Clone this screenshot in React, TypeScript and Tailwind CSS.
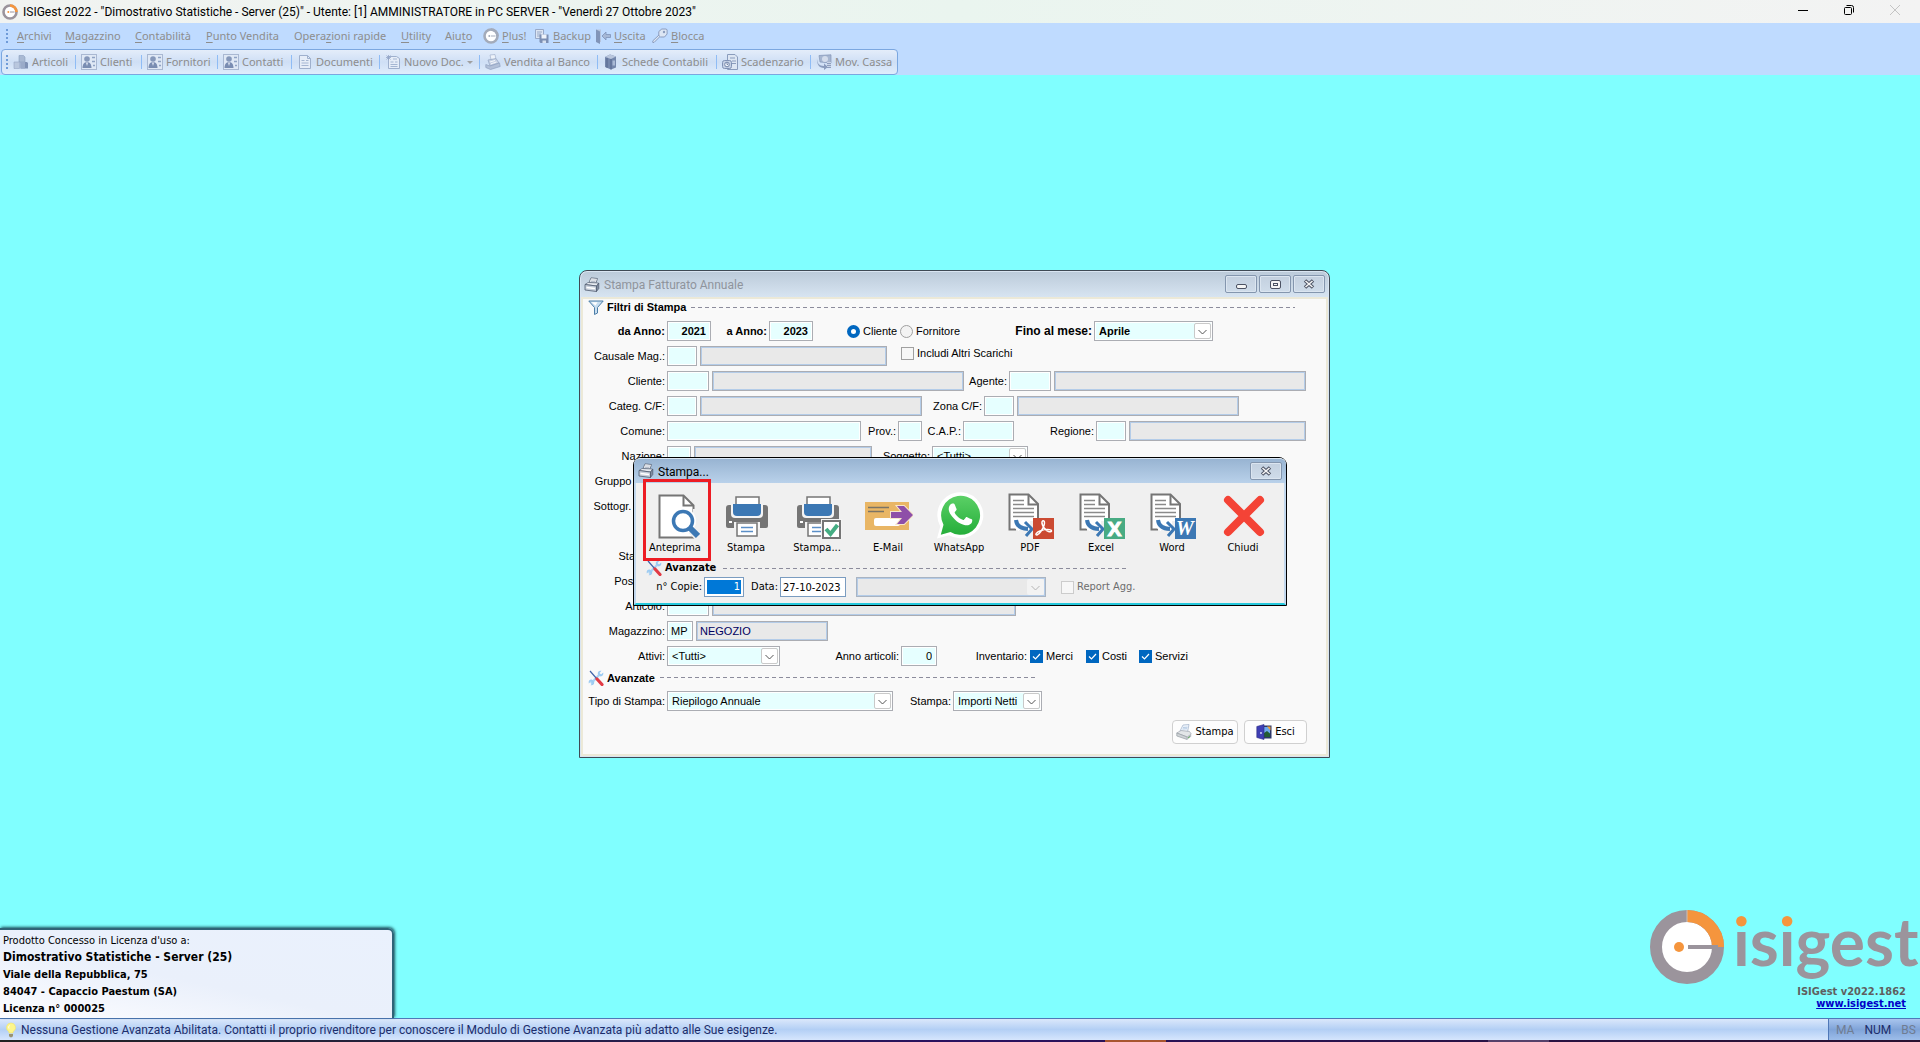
import { ReactNode } from "react";
import clsx from "clsx";

const ui = "font-['Noto_Sans','Open_Sans',sans-serif]";
const caption = "font-['Roboto','Noto_Sans',sans-serif]";
const tahoma = "font-['DejaVu_Sans_Condensed','DejaVu_Sans',sans-serif]";

/* ---------- small icons ---------- */

const Svg = ({ size = 16, children }: { size?: number; children: ReactNode }) => (
    <svg width={size} height={size} viewBox="0 0 16 16" fill="none" className="shrink-0" aria-hidden="true">
        {children}
    </svg>
);

const BrandDisc = ({ ring = "#9b949c", accent = "#f5953d" }: { ring?: string; accent?: string }) => (
    <Svg>
        <circle cx="8" cy="8" r="6.5" fill="#fff" stroke={ring} strokeWidth="2.6" />
        <path d="M8 1.5A6.5 6.5 0 0 1 14.500 8" stroke={accent} strokeWidth="2.600" />
        <path d="M8 8h4.500" stroke={ring} />
        <circle cx="6.300" cy="8" r="1" fill={accent} />
    </Svg>
);

const BoxesIcon = () => (
    <Svg>
        <path d="M6 1.500h4.500L12 3v5H6z" fill="#a9b9d3" stroke="#8b9dbd" strokeWidth=".6" />
        <path d="M1 8h5.500v6.500H1z" fill="#b9c7de" stroke="#93a5c4" strokeWidth=".6" />
        <path d="M7.500 8H14l1 1v5.500H7.500z" fill="#7f92b5" />
        <path d="M7.500 8H12v6.500H7.500z" fill="#9aabc9" />
    </Svg>
);

const ContactIcon = () => (
    <Svg>
        <rect x=".5" y=".5" width="15" height="15" fill="#dfe8f5" stroke="#a9b8d2" />
        <circle cx="6" cy="5" r="2.800" fill="#8698ba" />
        <path d="M1.500 14c0-4 2-6 4.500-6s4.500 2 4.500 6z" fill="#7a8db2" />
        <path d="M5 8.500h2L6 12z" fill="#e8eef8" />
        <path d="M11 3.500h3M11 7.500h3M12 11.500h2" stroke="#8fa2c4" strokeWidth="1.500" />
    </Svg>
);

const DocIcon = () => (
    <Svg>
        <path d="M2.500 1.500h8l3 3v10h-11z" fill="#e6edf8" stroke="#9fb0cd" />
        <path d="M10.500 1.500v3h3" stroke="#9fb0cd" />
        <path d="M4.500 6.500h3M9 6.500h2.500M4.500 9h7M4.500 11.500h7" stroke="#a5b6d2" />
    </Svg>
);

const NewDocIcon = () => (
    <Svg>
        <path d="M3.500 2.500h8l3 2v10h-11z" fill="#e6edf8" stroke="#9fb0cd" />
        <path d="M1 3.500h5M3.500 1v5M1.500 1.500l4 4M5.500 1.500l-4 4" stroke="#93a5c6" strokeWidth=".8" />
        <path d="M8 5h4M5.500 8h3M10 8h2.500M5.500 10.500h7M5.500 12.500h7" stroke="#a5b6d2" />
    </Svg>
);

const RegisterIcon = () => (
    <Svg>
        <path d="M5 1l5-.5 1 5H6z" fill="#eef3fa" stroke="#a3b2cd" strokeWidth=".7" />
        <path d="M3 6l8-1.500 3 4.500-9 3z" fill="#c5d0e3" stroke="#94a5c3" strokeWidth=".7" />
        <path d="M.8 10.500L5 12l9.500-3 .7 3.500-9.700 3-4.700-2z" fill="#b2c0d8" stroke="#8fa0c0" strokeWidth=".7" />
        <path d="M5 8l5-1.500M6 9.800l5.500-1.800" stroke="#f4f7fc" />
    </Svg>
);

const BooksIcon = () => (
    <Svg>
        <path d="M2 3l5-2.500 6 2v11L8 15.500 2 13z" fill="#7487ac" />
        <path d="M2 3l5-2.500 6 2-5 2.500z" fill="#b9c6dd" />
        <path d="M8 5v10.500M4 3.800v10" stroke="#56698f" />
        <path d="M9.500 6.500h2.500v5H9.500z" fill="#a9b9d5" />
    </Svg>
);

const ScheduleIcon = () => (
    <Svg>
        <path d="M5.500.5H13l2.500 2.500v12.500h-10z" fill="#dde6f3" stroke="#8a9cbd" />
        <path d="M8 4h5M10 7h4M10 9.500h4" stroke="#8a9cbd" />
        <rect x=".5" y="6.500" width="9" height="8" rx="2" fill="#c4d0e4" stroke="#8092b5" />
        <circle cx="5" cy="10.500" r="2.300" fill="#f2f6fb" stroke="#7386ab" />
        <path d="M5 9v1.500h1.200" stroke="#5f7299" strokeWidth=".8" />
    </Svg>
);

const CashIcon = () => (
    <Svg>
        <path d="M3 1.500L15 .8V9L4 8z" fill="#a6b6d1" stroke="#8496b8" strokeWidth=".7" />
        <path d="M1 4c0 5 2 8 7 8V9.500l4 3.500-4 3v-2C3 14 .5 10 1 4z" fill="#8a9cbe" />
        <circle cx="9" cy="5" r="3" fill="#d3dcec" />
        <path d="M11 8h4v6h-4z" fill="#c9d4e6" />
        <path d="M11 9.500h4M11 11.500h4M11 13.500h4" stroke="#7d90b4" strokeWidth=".8" />
    </Svg>
);

const BackupIcon = () => (
    <Svg>
        <path d="M1.500 1.500h8v9h-8z" fill="#dce5f3" stroke="#98a9c8" />
        <path d="M3 4h5M3 6h4M3 8h3" stroke="#98a9c8" />
        <path d="M5.500 6.500h9v8.500h-8l-1-1z" fill="#7c8fb4" />
        <path d="M7.500 6.500h5v4h-5z" fill="#eef3fb" />
        <path d="M8.500 12.500h3.500V15H8.500z" fill="#d6e0ef" />
    </Svg>
);

const DoorIcon = () => (
    <Svg>
        <path d="M1 1.500h5V14H1z" fill="#b6c5de" />
        <path d="M1 1.500l4 2V16l-4-2z" fill="#8194b8" />
        <path d="M7 8l4-4v2.500h4.500v3H11V12z" fill="#a6b8d6" stroke="#7f93b9" strokeWidth=".8" />
    </Svg>
);

const KeyIcon = () => (
    <Svg>
        <path d="M8 8.500L2 14.500H.8v-1.700L7 7" fill="#dce6f4" stroke="#8a9cbe" />
        <path d="M6.800 3.500l3-2.500h4.500l.8 1v4l-2.600 3H8.500L6.800 7.500z" fill="#dce6f4" stroke="#8a9cbe" />
        <circle cx="12" cy="4" r="1.200" fill="#8a9cbe" />
    </Svg>
);

const PrinterIcon = () => (
    <Svg>
        <path d="M5 5.500L7 .8l6.500.7L12 6z" fill="#fff" stroke="#596579" strokeWidth=".8" />
        <path d="M7 3h5M6.500 4.500h5" stroke="#9aa5b8" strokeWidth=".7" />
        <path d="M1 7.500L4 5.500l10.500.5L13 9z" fill="#e8ecf2" stroke="#5d687c" strokeWidth=".7" />
        <path d="M1 7.500L12.500 9v5.500L1 13z" fill="#c7cfdb" stroke="#4f5a6e" strokeWidth=".8" />
        <path d="M12.500 9L14.800 6v5.500l-2.300 3z" fill="#7f8ba0" stroke="#4f5a6e" strokeWidth=".7" />
        <path d="M2.500 10.500l8.500 1" stroke="#fff" strokeWidth="1.400" />
    </Svg>
);

const SoftPrinterIcon = () => (
    <Svg>
        <path d="M4 7L7 1l6-.5L11.500 8z" fill="#eef4fb" stroke="#9db0c9" strokeWidth=".7" />
        <path d="M7 3.500l4.500-.3M6.500 5l4.500-.3" stroke="#a9c3e0" strokeWidth=".8" />
        <path d="M.8 9L5 6.500l8.500 1 1.700 2.500-4 3z" fill="#e3e6e8" stroke="#a0a6ad" strokeWidth=".7" />
        <path d="M.8 9l10.400 4v2.500L.8 12z" fill="#cfd3d6" stroke="#979da5" strokeWidth=".7" />
        <path d="M11.200 13l4-3v2.500l-4 3z" fill="#b4bac0" />
        <path d="M12 14l2-1.500" stroke="#67b35d" />
    </Svg>
);

const ExitIcon = () => (
    <Svg>
        <path d="M6 1.500h9.500v13H6z" fill="#2d3768" />
        <path d="M8 3h6v10H8z" fill="#6da8ee" />
        <path d="M8 9l3-2 3 2.500V13H8z" fill="#235c33" />
        <path d="M11 2.500h3.500v4z" fill="#f5a32f" />
        <path d="M.8 2.500L8 .5v15l-7.200-2z" fill="#3f3fb4" stroke="#2c2c83" strokeWidth=".6" />
        <circle cx="5" cy="9" r=".9" fill="#e9e9ff" />
    </Svg>
);

const FunnelIcon = () => (
    <Svg>
        <path d="M.8 2h14.400L9.500 8.500V14l-3 1.500v-7z" fill="#c8def0" stroke="#4d7ea8" />
        <path d="M3.500 3.200h6L7.500 6.500z" fill="#fff" />
    </Svg>
);

const ToolsIcon = () => (
    <Svg>
        <path d="M3 13.500L12 4" stroke="#a9d3f5" strokeWidth="2.400" />
        <path d="M15.200 2.500L13 4.500 11.500 3l2-2.200c-2.500-.6-4.300 1.300-3.600 3.500l2 2c2.200.6 4-1.200 3.300-3.800z" fill="#9ccbf2" />
        <path d="M.8 13.500L3 11.500 4.500 13l-2 2.200c2.500.6 4.300-1.300 3.600-3.500l-2-2c-2.200-.6-4 1.200-3.300 3.800z" fill="#9ccbf2" />
        <path d="M2 1l7 8" stroke="#3f62a8" strokeWidth="1.200" />
        <path d="M9 9l5 5.500" stroke="#e23b45" strokeWidth="3.200" strokeLinecap="round" />
    </Svg>
);

const BulbIcon = () => (
    <Svg>
        <path d="M8 1a4.500 4.500 0 0 0-2.600 8.200c.5.400.6 1 .6 1.800h4c0-.8.1-1.400.6-1.800A4.500 4.500 0 0 0 8 1z" fill="#fdf68b" stroke="#f0e36a" strokeWidth=".6" />
        <path d="M6.500 3.500c-.8.800-1 2-.5 3" stroke="#fff" />
        <path d="M6 12h4v2l-1 1.200H7L6 14z" fill="#9a9472" />
    </Svg>
);

/* ---------- print dialog icons ---------- */

const Big = ({ children }: { children: ReactNode }) => (
    <svg width="48" height="48" viewBox="0 0 48 48" fill="none" aria-hidden="true">
        {children}
    </svg>
);

const PreviewIcon = () => (
    <Big>
        <path d="M7.500 4.500h24l10 10v32h-34z" fill="#fff" stroke="#757575" strokeWidth="2" />
        <path d="M31.500 5v9.500H41" stroke="#757575" strokeWidth="2" />
        <path d="M38 37l8 8" stroke="#f0f0f0" strokeWidth="9" />
        <path d="M43 18v16" stroke="#f0f0f0" strokeWidth="4" />
        <circle cx="31" cy="30" r="13" fill="#fff" />
        <circle cx="31" cy="30" r="9.500" fill="#fff" stroke="#3c78b4" strokeWidth="3.500" />
        <path d="M38 37l8 8" stroke="#3c78b4" strokeWidth="6" />
    </Big>
);

const PrinterShape = () => (
    <>
        <rect x="13" y="6" width="23" height="12" fill="#fff" stroke="#757575" strokeWidth="1.500" />
        <path d="M3 17q0-3 3-3h36q3 0 3 3v18q0 2-2 2H5q-2 0-2-2z" fill="#757575" />
        <path d="M8 13h32v10q0 4-4 4H12q-4 0-4-4z" fill="#f4f4f4" />
        <path d="M10 13h28v8q0 4-4 4H14q-4 0-4-4z" fill="#3c78b4" />
        <rect x="11" y="31" width="26" height="7" fill="#f4f4f4" />
        <rect x="14" y="32" width="20" height="13" fill="#fff" stroke="#757575" strokeWidth="1.500" />
        <path d="M18 36.500h12M18 40.500h12" stroke="#5b8fc7" strokeWidth="1.500" />
        <rect x="6" y="30" width="3" height="2" fill="#fff" />
    </>
);

const PrintIcon = () => (
    <Big>
        <PrinterShape />
    </Big>
);

const PrintSetupIcon = () => (
    <Big>
        <PrinterShape />
        <rect x="27" y="28" width="21" height="20" fill="#f4f4f4" />
        <rect x="29" y="30" width="17" height="17" fill="#fff" stroke="#757575" strokeWidth="2" />
        <path d="M32 38l4.500 5 7-9" stroke="#45ad83" strokeWidth="4" />
    </Big>
);

const MailIcon = () => (
    <Big>
        <rect x="0" y="11" width="44" height="28" fill="#e9b665" />
        <path d="M3 16.500h21M3 20.500h16" stroke="#7b7466" strokeWidth="1.500" />
        <rect x="9" y="27" width="26" height="8" rx="2" fill="#fff" />
        <path d="M26 21h11l-5-6h7l9 9-9 9h-7l5-6H26z" fill="#8e4fa8" stroke="#f6e6cb" strokeWidth="2" paintOrder="stroke" />
    </Big>
);

const WhatsAppIcon = () => (
    <Big>
        <defs>
            <linearGradient id="wa" x1="0" y1="0" x2="0" y2="1">
                <stop offset="0" stopColor="#5bd066" />
                <stop offset="1" stopColor="#25ae3a" />
            </linearGradient>
        </defs>
        <path d="M1 47.500l3.300-12A23 23 0 1 1 13 44.200z" fill="#fff" />
        <path d="M4.800 43.700l2.700-10A19.500 19.500 0 1 1 14.500 41z" fill="url(#wa)" />
        <path
            transform="translate(1 0) scale(1.95)"
            fill="#fff"
            d="M17.472 14.382c-.297-.149-1.758-.867-2.030-.967-.273-.099-.471-.148-.670.150-.197.297-.767.966-.940 1.164-.173.199-.347.223-.644.075-.297-.150-1.255-.463-2.390-1.475-.883-.788-1.480-1.761-1.653-2.059-.173-.297-.018-.458.130-.606.134-.133.298-.347.446-.520.149-.174.198-.298.298-.497.099-.198.050-.371-.025-.520-.075-.149-.669-1.612-.916-2.207-.242-.579-.487-.5-.669-.510-.173-.008-.371-.010-.570-.010-.198 0-.520.074-.792.372-.272.297-1.040 1.016-1.040 2.479 0 1.462 1.065 2.875 1.213 3.074.149.198 2.096 3.200 5.077 4.487.709.306 1.262.489 1.694.625.712.227 1.360.195 1.871.118.571-.085 1.758-.719 2.006-1.413.248-.694.248-1.289.173-1.413-.074-.124-.272-.198-.570-.347"
        />
    </Big>
);

const ExportIcon = ({ color, children }: { color: string; children: ReactNode }) => (
    <Big>
        <path d="M2.500 38.500v-35h19l9.500 9.500v25.500z" fill="#fff" />
        <path d="M9 38.500H2.500v-35h19l9.500 9.500V27" stroke="#757575" strokeWidth="2" />
        <path d="M21.500 4v9.500H31" stroke="#757575" strokeWidth="2" />
        <path d="M6 9.500h11M6 13.500h11M6 17.500h21M6 21.500h21M6 25.500h21" stroke="#8a8a8a" strokeWidth="1.500" />
        <path d="M9 29q1 9 13 9" stroke="#fff" strokeWidth="8" />
        <path d="M26 30v12H12" stroke="#f0f0f0" strokeWidth="6" />
        <path d="M9 29q1 8.500 12 9" stroke="#3c78b4" strokeWidth="4" />
        <path d="M18 31l7 7-6 7" stroke="#3c78b4" strokeWidth="3" />
        <rect x="26" y="27" width="21" height="21" fill={color} />
        {children}
    </Big>
);

const PdfIcon = () => (
    <ExportIcon color="#cb4a32">
        <path
            d="M35.500 30c2-1 2.500 1.500 1.500 4.500-1.200 3.600-4.500 9-7 9.500-2.500 0-.5-3 3.500-4.200 3.500-1.200 8.500-1.800 10.500-.6 1.500 1.200-.5 2-2.500 1.300-3.500-1.300-6-5.500-6.500-8-.2-1.200 0-2 .5-2.500z"
            stroke="#fff"
            strokeWidth="1.500"
        />
    </ExportIcon>
);

const ExcelIcon = () => (
    <ExportIcon color="#48ab83">
        <text x="36.500" y="45" textAnchor="middle" fill="#fff" stroke="#fff" className="font-['Liberation_Sans',sans-serif] text-[21px] font-bold">
            X
        </text>
    </ExportIcon>
);

const WordIcon = () => (
    <ExportIcon color="#3c78b4">
        <text x="36" y="44" textAnchor="middle" fill="#fff" className="font-['Liberation_Serif',serif] text-[20px] font-bold italic">
            W
        </text>
    </ExportIcon>
);

const CloseIcon = () => (
    <Big>
        <path d="M8 9l32 32M40 9L8 41" stroke="#f44336" strokeWidth="8" strokeLinecap="round" />
    </Big>
);

/* ---------- form controls ---------- */

const Label = ({ className, htmlFor, children }: { className?: string; htmlFor: string; children: ReactNode }) => (
    <label htmlFor={htmlFor} className={clsx("shrink-0 pr-[2px] text-right whitespace-nowrap", className)}>
        {children}
    </label>
);

const Field = ({ id, className, value = "" }: { id: string; className: string; value?: string }) => (
    <input
        id={id}
        defaultValue={value}
        className={clsx("h-5 shrink-0 border border-[#abadb3] bg-[#e6ffff] px-1 outline outline-1 -outline-offset-2 outline-white", className)}
    />
);

const ReadOnly = ({ name, className, value = "" }: { name: string; className: string; value?: string }) => (
    <input
        aria-label={name}
        readOnly
        defaultValue={value}
        className={clsx("ml-[3px] h-5 shrink-0 border border-[#abadb3] bg-[#e9e9e9] px-[3px] text-[#000060] outline outline-1 -outline-offset-2 outline-[#b4cce8]", className)}
    />
);

const Select = ({ id, name, className, value, disabled }: { id: string; name?: string; className: string; value: string; disabled?: boolean }) => (
    <span className={clsx("relative block h-5 shrink-0 border", disabled ? "border-[#a9b4c2] bg-[#e9e9e9]" : "border-[#abadb3] bg-[#e6ffff]", className)}>
        <select id={id} aria-label={name} disabled={disabled} className="block size-full appearance-none border border-white bg-transparent px-[3px] leading-4 disabled:border-[#b4cce8]">
            <option>{value}</option>
        </select>
        <span
            className={clsx(
                "pointer-events-none absolute top-px right-px flex h-4 w-[17px] items-center justify-center rounded-xs",
                disabled ? "bg-[#f3f3f3] text-[#b5b5b5]" : "border border-[#c9c9c9] bg-white text-[#555]",
            )}
        >
            <svg width="9" height="6" viewBox="0 0 9 6" fill="none" className="mt-[2px]" aria-hidden="true">
                <path d="M.5 1l4 4 4-4" stroke="currentColor" />
            </svg>
        </span>
    </span>
);

const Check = ({ label, checked, disabled, className }: { label: string; checked?: boolean; disabled?: boolean; className?: string }) => (
    <label className={clsx("flex shrink-0 items-center gap-[3px] whitespace-nowrap", className)}>
        <span className="relative flex size-[13px]">
            <input
                type="checkbox"
                defaultChecked={checked}
                disabled={disabled}
                className="peer size-[13px] appearance-none border border-[#a0a0a0] bg-[#f7f7f7] checked:border-[#0067c0] checked:bg-[#0067c0] disabled:border-[#cccccc]"
            />
            <svg viewBox="0 0 13 13" fill="none" className="pointer-events-none absolute inset-0 hidden peer-checked:block" aria-hidden="true">
                <path d="M3 6.500L5.500 9 10 4" stroke="#fff" strokeWidth="1.200" />
            </svg>
        </span>
        {label}
    </label>
);

const Radio = ({ label, checked, className }: { label: string; checked?: boolean; className?: string }) => (
    <label className={clsx("flex shrink-0 items-center gap-[3px]", className)}>
        <input
            type="radio"
            name="soggetto-tipo"
            defaultChecked={checked}
            className="size-[13px] appearance-none rounded-full border border-[#a0a0a0] bg-[#f3f3f3] checked:border-4 checked:border-[#0067c0] checked:bg-white"
        />
        {label}
    </label>
);

const Row = ({ children }: { children?: ReactNode }) => <div className="flex h-5 items-center">{children}</div>;

const Dashes = ({ className }: { className: string }) => (
    <span className={clsx("h-px shrink-0 bg-[repeating-linear-gradient(90deg,#8c8c9c_0_4px,transparent_4px_7px)]", className)} />
);

const lbl = "w-[84px]";

const CaptionButton = ({ name, children }: { name: string; children: ReactNode }) => (
    <button
        aria-label={name}
        className="flex h-[18px] w-8 items-center justify-center rounded-xs border border-[#8496ae] bg-linear-to-b from-[#c3d0df] to-[#cfdcea] shadow-[inset_0_0_0_1px_#dbe5f0]"
    >
        {children}
    </button>
);

const CaptionX = () => (
    <svg width="12" height="10" viewBox="0 0 12 10" fill="none" aria-hidden="true">
        <path d="M2 1.500l8 7M10 1.500l-8 7" stroke="#4c5263" strokeWidth="3.600" />
        <path d="M2.500 2l7 6M9.500 2l-7 6" stroke="#f5f5f5" strokeWidth="1.600" />
    </svg>
);

/* ---------- windows ---------- */

const ReportWindow = () => (
    <section className="absolute top-[195px] left-[579px] flex h-[488px] w-[751px] flex-col rounded-t-lg border border-[#3f4a55] bg-[#d9e5f2] p-px font-['Liberation_Sans',Arial,sans-serif] text-[11px] leading-4 text-black">
        <header className={clsx("flex h-[25px] shrink-0 items-center rounded-t-md bg-linear-to-b from-[#bccbda] to-[#d7e4f1] pr-[3px] pl-[3px]", caption)}>
            <PrinterIcon />
            <h2 className="ml-1 flex-1 text-xs text-[#8f949c]">Stampa Fatturato Annuale</h2>
            <div className="flex gap-[2px] pb-px">
                <CaptionButton name="Riduci a icona">
                    <span className="mt-1 h-[5px] w-[11px] rounded-xs border border-[#4c5263] bg-[#f5f5f5]" />
                </CaptionButton>
                <CaptionButton name="Ingrandisci">
                    <span className="flex h-[9px] w-[11px] items-center justify-center rounded-xs border border-[#4c5263] bg-[#f5f5f5]">
                        <span className="h-[3px] w-[5px] border border-[#4c5263]" />
                    </span>
                </CaptionButton>
                <CaptionButton name="Chiudi">
                    <CaptionX />
                </CaptionButton>
            </div>
        </header>

        <form className="flex flex-1 flex-col border-2 border-[#ece9d8] bg-[#f9f9f9]" onSubmit={(e) => e.preventDefault()}>
            <div className="flex h-[22px] shrink-0 items-center pb-[6px] pl-[5px]">
                <FunnelIcon />
                <h3 className="ml-[3px] w-[84px] font-bold whitespace-nowrap">Filtri di Stampa</h3>
                <Dashes className="w-[604px]" />
            </div>

            <div className="flex flex-col gap-[5px]">
                <Row>
                    <Label htmlFor="da-anno" className={clsx(lbl, "font-bold")}>da Anno:</Label>
                    <Field id="da-anno" className="w-11 text-right font-bold" value="2021" />
                    <Label htmlFor="a-anno" className="w-[58px] font-bold">a Anno:</Label>
                    <Field id="a-anno" className="w-11 text-right font-bold" value="2023" />
                    <Radio label="Cliente" checked className="ml-[34px] w-[53px]" />
                    <Radio label="Fornitore" />
                    <Label htmlFor="mese" className="ml-auto text-xs font-bold">Fino al mese:</Label>
                    <Select id="mese" className="mr-[113px] w-[119px] font-bold" value="Aprile" />
                </Row>
                <Row>
                    <Label htmlFor="causale" className={lbl}>Causale Mag.:</Label>
                    <Field id="causale" className="w-[30px]" />
                    <ReadOnly name="Descrizione causale" className="w-[187px]" />
                    <Check label="Includi Altri Scarichi" className="ml-[14px] pb-[6px]" />
                </Row>
                <Row>
                    <Label htmlFor="cliente" className={lbl}>Cliente:</Label>
                    <Field id="cliente" className="w-[42px]" />
                    <ReadOnly name="Nome cliente" className="w-[252px]" />
                    <Label htmlFor="agente" className="w-[45px]">Agente:</Label>
                    <Field id="agente" className="w-[42px]" />
                    <ReadOnly name="Nome agente" className="w-[252px]" />
                </Row>
                <Row>
                    <Label htmlFor="categ" className={lbl}>Categ. C/F:</Label>
                    <Field id="categ" className="w-[30px]" />
                    <ReadOnly name="Descrizione categoria" className="w-[222px]" />
                    <Label htmlFor="zona" className="w-[62px]">Zona C/F:</Label>
                    <Field id="zona" className="w-[30px]" />
                    <ReadOnly name="Descrizione zona" className="w-[222px]" />
                </Row>
                <Row>
                    <Label htmlFor="comune" className={lbl}>Comune:</Label>
                    <Field id="comune" className="w-[194px]" />
                    <Label htmlFor="prov" className="w-[37px]">Prov.:</Label>
                    <Field id="prov" className="w-6" />
                    <Label htmlFor="cap" className="w-[41px]">C.A.P.:</Label>
                    <Field id="cap" className="w-[51px]" />
                    <Label htmlFor="regione" className="w-[82px]">Regione:</Label>
                    <Field id="regione" className="w-[30px]" />
                    <ReadOnly name="Nome regione" className="w-[177px]" />
                </Row>
                <Row>
                    <Label htmlFor="nazione" className={lbl}>Nazione:</Label>
                    <Field id="nazione" className="w-6" />
                    <ReadOnly name="Nome nazione" className="w-[178px]" />
                    <Label htmlFor="soggetto" className="w-[60px]">Soggetto:</Label>
                    <Select id="soggetto" className="w-24" value="&lt;Tutti&gt;" />
                </Row>
                <Row>
                    <Label htmlFor="gruppo" className={lbl}>Gruppo Merc.:</Label>
                    <Field id="gruppo" className="w-[42px]" />
                </Row>
                <Row>
                    <Label htmlFor="sottogruppo" className={lbl}>Sottogr. Merc.:</Label>
                    <Field id="sottogruppo" className="w-[42px]" />
                </Row>
                <Row>
                    <Label htmlFor="linea" className={lbl}>Linea:</Label>
                    <Field id="linea" className="w-[42px]" />
                </Row>
                <Row>
                    <Label htmlFor="stagione" className={lbl}>Stagione:</Label>
                    <Field id="stagione" className="w-[42px]" />
                </Row>
                <Row>
                    <Label htmlFor="posizione" className={lbl}>Posizione:</Label>
                    <Field id="posizione" className="w-[42px]" />
                </Row>
                <Row>
                    <Label htmlFor="articolo" className={lbl}>Articolo:</Label>
                    <Field id="articolo" className="w-[42px]" />
                    <ReadOnly name="Descrizione articolo" className="w-[304px]" />
                </Row>
                <Row>
                    <Label htmlFor="magazzino" className={lbl}>Magazzino:</Label>
                    <Field id="magazzino" className="w-[26px] px-[3px]" value="MP" />
                    <ReadOnly name="Nome magazzino" className="w-[132px]" value="NEGOZIO" />
                </Row>
                <Row>
                    <Label htmlFor="attivi" className={lbl}>Attivi:</Label>
                    <Select id="attivi" className="w-[113px]" value="&lt;Tutti&gt;" />
                    <Label htmlFor="anno-articoli" className="w-[121px]">Anno articoli:</Label>
                    <Field id="anno-articoli" className="w-9 text-right" value="0" />
                    <span className="w-[93px] shrink-0 pr-[3px] text-right">Inventario:</span>
                    <Check label="Merci" checked className="w-14" />
                    <Check label="Costi" checked className="w-[53px]" />
                    <Check label="Servizi" checked />
                </Row>
            </div>

            <div className="flex h-[25px] items-center pb-[2px] pl-[5px]">
                <ToolsIcon />
                <h3 className="ml-[3px] w-[53px] font-bold">Avanzate</h3>
                <Dashes className="w-[376px]" />
            </div>
            <Row>
                <Label htmlFor="tipo" className={lbl}>Tipo di Stampa:</Label>
                <Select id="tipo" className="w-[226px]" value="Riepilogo Annuale" />
                <Label htmlFor="stampa" className="w-[60px]">Stampa:</Label>
                <Select id="stampa" className="w-[89px]" value="Importi Netti" />
            </Row>
            <div className={clsx("mt-[9px] mr-[19px] flex justify-end gap-[6px]", tahoma)}>
                <button className="flex h-6 w-[66px] items-center justify-center gap-[3px] rounded-sm border border-[#d0d0d0] bg-[#fdfdfd]">
                    <SoftPrinterIcon />
                    Stampa
                </button>
                <button className="flex h-6 w-[63px] items-center justify-center gap-[3px] rounded-sm border border-[#d0d0d0] bg-[#fdfdfd]">
                    <ExitIcon />
                    Esci
                </button>
            </div>
        </form>
    </section>
);

const printActions = [
    { label: "Anteprima", icon: <PreviewIcon />, highlighted: true },
    { label: "Stampa", icon: <PrintIcon /> },
    { label: "Stampa...", icon: <PrintSetupIcon /> },
    { label: "E-Mail", icon: <MailIcon /> },
    { label: "WhatsApp", icon: <WhatsAppIcon /> },
    { label: "PDF", icon: <PdfIcon /> },
    { label: "Excel", icon: <ExcelIcon /> },
    { label: "Word", icon: <WordIcon /> },
    { label: "Chiudi", icon: <CloseIcon /> },
];

const PrintDialog = () => (
    <section
        role="dialog"
        aria-label="Stampa"
        className={clsx("absolute top-[382px] left-[633px] flex h-[149px] w-[654px] flex-col rounded-t-lg border border-black bg-[#f0f0f0] text-[11px] leading-4 text-black", tahoma)}
    >
        <header className={clsx("flex h-[25px] shrink-0 items-center rounded-t-md border-t border-[#dce8f4] bg-linear-to-b from-[#98b4d2] to-[#b9d1ea] pr-1 pl-1", caption)}>
            <PrinterIcon />
            <h2 className="ml-1 flex-1 pt-px text-xs">Stampa...</h2>
            <CaptionButton name="Chiudi finestra">
                <CaptionX />
            </CaptionButton>
        </header>
        <div className="flex flex-1 flex-col border-x-2 border-b-2 border-x-[#c3d8ee] border-b-[#25c8dc]">
            <div className="flex pt-2 pl-1">
                {printActions.map((action) => (
                    <button key={action.label} className="relative flex w-[71px] flex-col items-center">
                        {action.icon}
                        <span className="pt-px pr-px">{action.label}</span>
                        {action.highlighted && <span className="absolute -top-3 left-[3px] h-[82px] w-[68px] border-3 border-[#ed1c24]" />}
                    </button>
                ))}
            </div>
            <div className="mt-1 flex h-4 items-center pl-[10px]">
                <ToolsIcon />
                <h3 className="ml-[3px] w-[58px] font-bold">Avanzate</h3>
                <Dashes className="w-[405px]" />
            </div>
            <div className="mt-px flex h-5 items-center">
                <Label htmlFor="copie" className="w-[68px]">n° Copie:</Label>
                <span className="flex h-5 w-10 shrink-0 items-center border border-[#7a9cc0] bg-white px-[2px]">
                    <input id="copie" defaultValue="1" className="h-[14px] w-full bg-[#0078d7] pr-px text-right leading-[14px] text-white" />
                </span>
                <Label htmlFor="data" className="w-9">Data:</Label>
                <input id="data" defaultValue="27-10-2023" className="h-5 w-[66px] border border-[#7a9cc0] bg-white px-[2px]" />
                <Select id="profilo" name="Profilo di stampa" disabled className="ml-[10px] w-[190px]" value="" />
                <Check label="Report Agg." disabled className="ml-[15px] text-[#6d6d6d]" />
            </div>
        </div>
    </section>
);

/* ---------- application chrome ---------- */

const Menu = ({ before = "", hot, after = "", icon, className }: { before?: string; hot: string; after?: string; icon?: ReactNode; className: string }) => (
    <button className={clsx("flex shrink-0 items-center gap-[3px] whitespace-nowrap", className)}>
        {icon}
        <span>
            {before}
            <u className="underline-offset-2">{hot}</u>
            {after}
        </span>
    </button>
);

const tools = [
    { label: "Articoli", icon: <BoxesIcon />, width: "w-[63px]" },
    { label: "Clienti", icon: <ContactIcon />, width: "w-[66px]" },
    { label: "Fornitori", icon: <ContactIcon />, width: "w-[76px]" },
    { label: "Contatti", icon: <ContactIcon />, width: "w-[74px]" },
    { label: "Documenti", icon: <DocIcon />, width: "w-[88px]" },
    { label: "Nuovo Doc.", icon: <NewDocIcon />, width: "w-[100px]", menu: true },
    { label: "Vendita al Banco", icon: <RegisterIcon />, width: "w-[118px]" },
    { label: "Schede Contabili", icon: <BooksIcon />, width: "w-[119px]" },
    { label: "Scadenzario", icon: <ScheduleIcon />, width: "w-[94px]" },
    { label: "Mov. Cassa", icon: <CashIcon />, width: "w-[86px]" },
];

const Grip = () => <span className="mr-[5px] h-[14px] w-[2px] shrink-0 bg-[repeating-linear-gradient(180deg,#6f9bd8_0_2px,transparent_2px_4px)]" />;

const TitleBar = () => (
    <header className={clsx("flex h-[23px] shrink-0 items-center bg-linear-to-r from-[#f1f3f1] via-[#eaf5ef] to-[#f3f3f3] pr-[2px] pl-[2px] text-xs text-black", caption)}>
        <BrandDisc />
        <h1 className="ml-[5px] flex-1 whitespace-nowrap">
            ISIGest 2022 - "Dimostrativo Statistiche - Server (25)" - Utente: [1] AMMINISTRATORE in PC SERVER - "Venerdì 27 Ottobre 2023"
        </h1>
        <div className="flex pb-[3px]">
            <button aria-label="Riduci a icona" className="flex w-[46px] justify-center">
                <svg width="12" height="12" viewBox="0 0 12 12" aria-hidden="true"><path d="M1 6.500h10" stroke="#000" /></svg>
            </button>
            <button aria-label="Ripristina" className="flex w-[46px] justify-center">
                <svg width="12" height="12" viewBox="0 0 12 12" fill="none" aria-hidden="true">
                    <rect x="1.500" y="3.500" width="7" height="7" rx="1" stroke="#000" />
                    <path d="M3.500 1.500h5q2 0 2 2v5" stroke="#000" />
                </svg>
            </button>
            <button aria-label="Chiudi" className="flex w-[46px] justify-center">
                <svg width="12" height="12" viewBox="0 0 12 12" aria-hidden="true"><path d="M1 1l10 10M11 1L1 11" stroke="#c4c4c4" /></svg>
            </button>
        </div>
    </header>
);

const License = () => (
    <aside className={clsx("absolute bottom-0 left-0 h-[90px] w-[394px] rounded-tr-md border-t-2 border-r-2 border-[#2f6478] bg-[linear-gradient(12deg,#fdfdff_0%,#eaf0fb_45%,#eaf1fd_100%)] pt-[2px] pl-[3px] text-[11px] leading-[17px] text-black shadow-[1px_-1px_3px_#1d5560]", tahoma)}>
        <p>Prodotto Concesso in Licenza d'uso a:</p>
        <p className="text-xs leading-[17px] font-bold">Dimostrativo Statistiche - Server (25)</p>
        <p className="font-bold">Viale della Repubblica, 75</p>
        <p className="font-bold">84047 - Capaccio Paestum (SA)</p>
        <p className="font-bold">Licenza n° 000025</p>
    </aside>
);

const Brand = () => (
    <div className="absolute right-0 bottom-2 flex w-[272px] flex-col items-end">
        <svg width="272" height="78" viewBox="0 0 272 78" aria-label="isigest" className="overflow-visible">
            <defs>
                {/* orange above the stem, grey below: colours only the dot of each "i" */}
                <linearGradient id="dotted" gradientUnits="userSpaceOnUse" x1="0" y1="0" x2="0" y2="78">
                    <stop offset=".29" stopColor="#f5953d" />
                    <stop offset=".29" stopColor="#9b949c" />
                </linearGradient>
            </defs>
            <circle cx="39" cy="39" r="31" fill="#fff" stroke="#9b949c" strokeWidth="12" />
            <path d="M39 8a31 31 0 0 1 31 31" fill="none" stroke="#f5953d" strokeWidth="12" />
            <path d="M40 39h30" stroke="#9b949c" strokeWidth="4" />
            <path d="M39 2v12" stroke="#c9c0b8" />
            <circle cx="31" cy="39" r="5" fill="#f5953d" />
            <text x="85" y="58" fill="#9b949c" className="font-['Lato',sans-serif] text-[66px] font-bold">
                <tspan fill="url(#dotted)">i</tspan>s<tspan fill="url(#dotted)">i</tspan>gest
            </text>
        </svg>
        <div className={clsx("flex flex-col items-end pr-[14px] text-[11px] leading-3 font-bold", tahoma)}>
            <span className="text-[#5f5f5f]">ISIGest v2022.1862</span>
            <a href="#isigest" className="text-[#0000c8] underline">www.isigest.net</a>
        </div>
    </div>
);

export default function App() {
    return (
        <div className="flex h-screen flex-col overflow-hidden bg-[#80ffff]">
            <TitleBar />
            <nav className={clsx("flex h-[26px] shrink-0 items-center bg-[#bfdbff] pl-[6px] text-[11px] text-[#8d8d8d]", ui)}>
                <Grip />
                <Menu hot="A" after="rchivi" className="ml-1 w-12" />
                <Menu hot="M" after="agazzino" className="w-[70px]" />
                <Menu hot="C" after="ontabilità" className="w-[71px]" />
                <Menu hot="P" after="unto Vendita" className="w-[88px]" />
                <Menu before="Opera" hot="z" after="ioni rapide" className="w-[107px]" />
                <Menu hot="U" after="tility" className="w-11" />
                <Menu before="Aiu" hot="t" after="o" className="w-[38px]" />
                <Menu hot="P" after="lus!" icon={<BrandDisc ring="#a3abba" accent="#a3abba" />} className="w-[51px]" />
                <Menu hot="B" after="ackup" icon={<BackupIcon />} className="w-[61px]" />
                <Menu hot="U" after="scita" icon={<DoorIcon />} className="w-[57px]" />
                <Menu hot="B" after="locca" icon={<KeyIcon />} className="w-[55px]" />
            </nav>
            <div className="flex h-[26px] shrink-0 bg-[#bfdbff] pl-px">
                <div
                    role="toolbar"
                    className={clsx("flex items-center rounded-sm border border-[#7ba7e0] bg-linear-to-b from-[#e4edfa] via-[#cfdff5] to-[#e0edfc] pl-1 text-[11px] text-[#8d8d8d]", ui)}
                >
                    <Grip />
                    {tools.map((tool, i) => (
                        <button
                            key={tool.label}
                            className={clsx("flex h-[14px] shrink-0 items-center gap-[3px] whitespace-nowrap", tool.width, i < tools.length - 1 && "border-r border-[#8fbcf5]", i > 0 && "pl-[5px]")}
                        >
                            {tool.icon}
                            {tool.label}
                            {tool.menu && <span className="border-x-3 border-t-3 border-x-transparent border-t-[#a0a0a0]" />}
                        </button>
                    ))}
                </div>
            </div>

            <main className="relative flex-1">
                <License />
                <Brand />
                <ReportWindow />
                <PrintDialog />
            </main>

            <footer className={clsx("flex h-[22px] shrink-0 items-stretch border-t border-[#4f78b8] bg-linear-to-b from-[#dbe8fb] via-[#b3cff5] to-[#d6e6fd] text-xs text-[#1c2d6b]", caption)}>
                <div className="flex flex-1 items-center gap-[2px] pl-[3px]">
                    <BulbIcon />
                    <span>Nessuna Gestione Avanzata Abilitata. Contatti il proprio rivenditore per conoscere il Modulo di Gestione Avanzata più adatto alle Sue esigenze.</span>
                </div>
                <div className="flex w-[92px] items-center gap-[10px] border-l border-[#4f78b8] bg-linear-to-b from-[#a9c5ee] via-[#7fa3d8] to-[#9dbdea] pl-[7px]">
                    <span className="text-[#6f7c92]">MA</span>
                    <span>NUM</span>
                    <span className="text-[#6f7c92]">BS</span>
                </div>
            </footer>
            <div className="flex h-[2px] shrink-0 bg-linear-to-r from-[#222222] via-[#2a1160] to-[#2a1030]">
                <span className="ml-[1105px] w-[61px] bg-[#a8552f]" />
                <span className="ml-[322px] w-[61px] bg-[#55406a]" />
            </div>
        </div>
    );
}
